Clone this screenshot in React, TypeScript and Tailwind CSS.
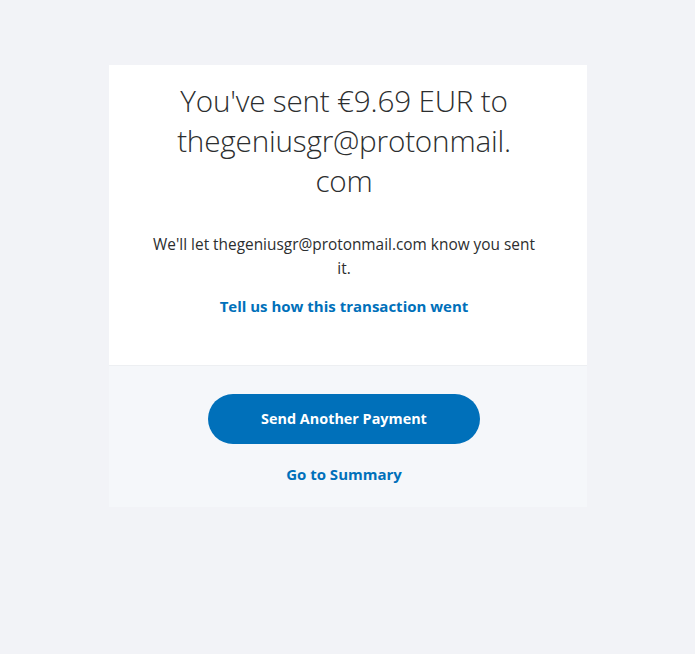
import React from "react";

export default function App() {
  return (
    <div
      className="min-h-[654px] w-full bg-[#f2f3f7] pt-[65px]"
      style={{ fontFamily: '"Open Sans", "Noto Sans", sans-serif' }}
    >
      <div className="w-[478px] ml-[109px]">
        <div className="bg-white pl-[36px] pr-[44px] pt-[16px] pb-[47px] text-center">
          <h1 className="text-[29.7px] leading-[40px] font-light text-[#2c2e2f] tracking-[-0.2px]">
            You've sent €9.69 EUR to
            <br />
            thegeniusgr@protonmail.
            <br />
            com
          </h1>
          <p className="mt-[32px] text-[15.4px] leading-[24px] text-[#2c2e2f]">
            We'll let thegeniusgr@protonmail.com know you sent
            <br />
            it.
          </p>
          <a href="#" className="mt-[13px] block text-[15px] leading-[24px] font-bold text-[#0070ba]">
            Tell us how this transaction went
          </a>
        </div>
        <div className="border-t border-[#edeff2] bg-[#f5f7fa] pr-[8px] pt-[28px] pb-[21px] flex flex-col items-center">
          <button className="h-[50px] w-[272px] rounded-full bg-[#0070ba] text-[14.4px] font-bold text-white">
            Send Another Payment
          </button>
          <a href="#" className="mt-[18px] text-[15px] leading-[24px] font-bold text-[#0070ba]">
            Go to Summary
          </a>
        </div>
      </div>
    </div>
  );
}
